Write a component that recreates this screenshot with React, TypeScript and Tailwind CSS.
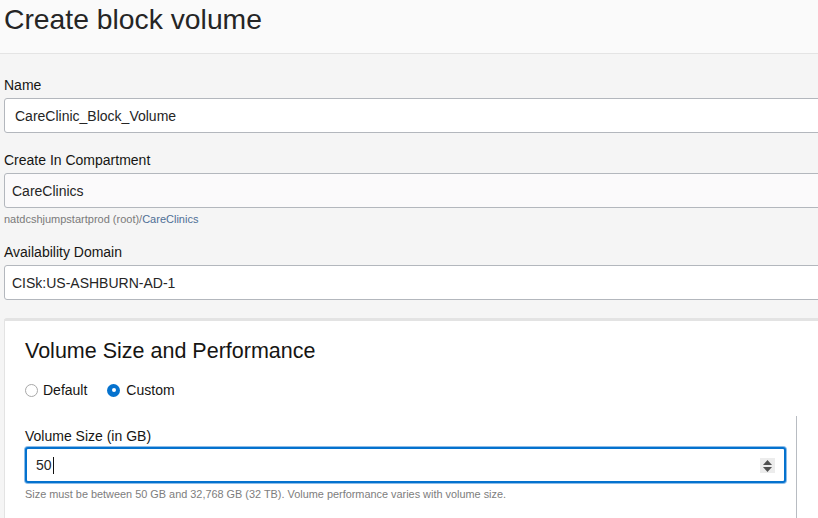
import React from "react";

export default function App() {
  return (
    <div
      className="w-[818px] h-[518px] overflow-hidden bg-[#f5f5f5] text-[#161513]"
      style={{ fontFamily: '"Liberation Sans", Arial, sans-serif' }}
    >
      <div className="h-[54px] bg-[#fafafa] border-b border-[#e4e4e4] pl-[4px] pt-[3px]">
        <h1 className="text-[28.3px] leading-[32px] text-[#252525] font-normal">Create block volume</h1>
      </div>

      <div className="pl-[4px]">
        <div className="mt-[23px] text-[14px] leading-[16px]">Name</div>
        <div className="mt-[5px] w-[900px] h-[35px] bg-white border border-[#b3b7bd] rounded-[3px] pl-[10px] pt-[1px] flex items-center text-[14px] text-[#252525]">
          CareClinic_Block_Volume
        </div>

        <div className="mt-[19px] text-[14px] leading-[16px]">Create In Compartment</div>
        <div className="mt-[5px] w-[900px] h-[35px] bg-[#fbfafb] border border-[#b3b7bd] rounded-[3px] pl-[7px] pt-[1px] flex items-center text-[14px] text-[#252525]">
          CareClinics
        </div>
        <div className="mt-[5px] text-[11px] leading-[13px] text-[#7a7a7a]">
          natdcshjumpstartprod (root)/<span className="text-[#4f6f96]">CareClinics</span>
        </div>

        <div className="mt-[18px] text-[14px] leading-[16px]">Availability Domain</div>
        <div className="mt-[5px] w-[900px] h-[35px] bg-white border border-[#b3b7bd] rounded-[3px] pl-[7px] pt-[1px] flex items-center text-[14px] text-[#252525]">
          CISk:US-ASHBURN-AD-1
        </div>

        <div className="mt-[18px] w-[900px] h-[300px] bg-white border-t-[3px] border-l border-[#e3e3e3] rounded-tl-[3px] pl-[20px] pt-[17px]">
          <h2 className="text-[21.5px] leading-[26px] font-normal text-[#161513]">Volume Size and Performance</h2>

          <div className="mt-[18px] flex items-center text-[14px] leading-[16px] h-[16px]">
            <span className="w-[13px] h-[13px] rounded-full border border-[#a8a8a8] bg-white"></span>
            <span className="ml-[5px]">Default</span>
            <span className="ml-[20px] w-[13px] h-[13px] rounded-full bg-[#0572ce] flex items-center justify-center">
              <span className="w-[4px] h-[4px] rounded-full bg-white"></span>
            </span>
            <span className="ml-[6px]">Custom</span>
          </div>

          <div className="mt-[18px] w-[772px] border-r border-[#b8bcc2] pt-[12px] pb-[20px]">
            <div className="text-[14px] leading-[16px]">Volume Size (in GB)</div>
            <div className="mt-[3px] w-[761px] h-[36px] border-2 border-[#0572ce] rounded-[3px] shadow-[0_0_0_1px_#8dbde9] bg-white flex items-center pl-[9px] pr-[9px] pt-[1px] text-[14px] text-[#252525]">
              <span>50</span>
              <span className="w-[1px] h-[17px] bg-[#111] ml-[1px]"></span>
              <span className="ml-auto w-[15px] h-[15px] bg-[#ececec] flex flex-col items-center justify-center gap-[2px]">
                <svg width="9" height="5" viewBox="0 0 9 5"><path d="M0 5 L4.5 0 L9 5 Z" fill="#505050" /></svg>
                <svg width="9" height="5" viewBox="0 0 9 5"><path d="M0 0 L4.5 5 L9 0 Z" fill="#505050" /></svg>
              </span>
            </div>
            <div className="mt-[5px] text-[10.9px] leading-[13px] text-[#7d7d7d]">
              Size must be between 50 GB and 32,768 GB (32 TB). Volume performance varies with volume size.
            </div>
          </div>
        </div>
      </div>
    </div>
  );
}
